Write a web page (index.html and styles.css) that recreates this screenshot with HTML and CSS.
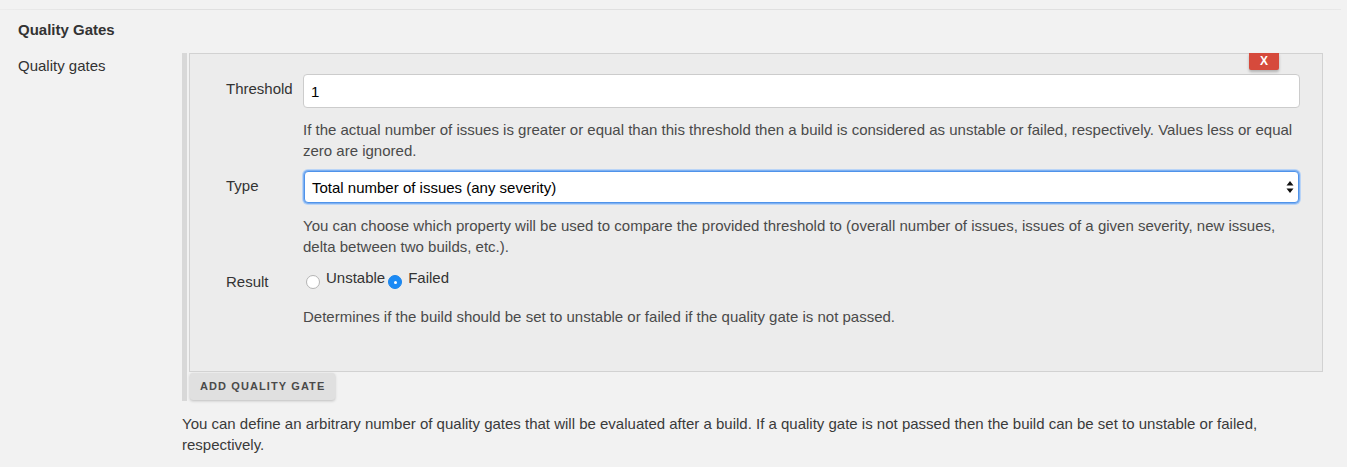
FILE: index.html
```html
<!DOCTYPE html>
<html>
<head>
<meta charset="utf-8">
<link rel="stylesheet" href="styles.css">
</head>
<body>
<div class="rule"></div>
<div class="section-title">Quality Gates</div>
<div class="field">
  <div class="field-label">Quality gates</div>
  <div class="field-body">
    <div class="repeated">
      <div class="chunk">
        <div class="delete-btn">X</div>
        <div class="entry">
          <div class="entry-label">Threshold</div>
          <div class="entry-control">
            <div class="text-input">1</div>
            <div class="help help-first">If the actual number of issues is greater or equal than this threshold then a build is considered as unstable or failed, respectively. Values less or equal zero are ignored.</div>
          </div>
        </div>
        <div class="entry entry-type">
          <div class="entry-label">Type</div>
          <div class="entry-control">
            <div class="select-input">
              <span>Total number of issues (any severity)</span>
              <svg class="arrows" width="8" height="12" viewBox="0 0 8 12"><path d="M4 0 L7.5 4.5 L0.5 4.5 Z M4 12 L7.5 7.5 L0.5 7.5 Z" fill="#111"/></svg>
            </div>
            <div class="help">You can choose which property will be used to compare the provided threshold to (overall number of issues, issues of a given severity, new issues, delta between two builds, etc.).</div>
          </div>
        </div>
        <div class="entry entry-result">
          <div class="entry-label">Result</div>
          <div class="entry-control">
            <div class="radios">
              <span class="radio"></span><span class="radio-text">Unstable</span>
              <span class="radio checked"></span><span class="radio-text">Failed</span>
            </div>
            <div class="help help-result">Determines if the build should be set to unstable or failed if the quality gate is not passed.</div>
          </div>
        </div>
      </div>
      <div class="add-btn">ADD QUALITY GATE</div>
    </div>
    <div class="description">You can define an arbitrary number of quality gates that will be evaluated after a build. If a quality gate is not passed then the build can be set to unstable or failed, respectively.</div>
  </div>
</div>
</body>
</html>
```

FILE: styles.css
```css
html, body {
  margin: 0;
  padding: 0;
  background: #f2f2f2;
  font-family: "Liberation Sans", Arial, Helvetica, sans-serif;
  font-size: 15px;
  color: #333;
}
body {
  padding-top: 9px;
}
.rule {
  height: 1px;
  margin-right: 6px;
  background: linear-gradient(to right, #ececec, #e0e0e0 8%, #e0e0e0 92%, #e8e8e8);
}
.section-title {
  margin-top: 10px;
  padding-left: 18px;
  line-height: 20px;
  font-weight: bold;
  color: #333;
}
.field {
  display: grid;
  grid-template-columns: 182px 1fr;
  margin-top: 13px;
}
.field-label {
  padding-left: 18px;
  padding-top: 3px;
  line-height: 20px;
  color: #333;
}
.field-body {
  padding-right: 24px;
}
.repeated {
  border-left: 5px solid #d8d8d8;
  padding-left: 2px;
  padding-bottom: 1px;
}
.chunk {
  position: relative;
  background: #ececec;
  border: 1px solid #d2d2d2;
  padding: 20px 22px 44px 0;
}
.delete-btn {
  position: absolute;
  top: -1px;
  right: 43px;
  width: 30px;
  height: 17px;
  line-height: 17px;
  text-align: center;
  background: #d64a3c;
  color: #fff;
  font-size: 12px;
  font-weight: bold;
  border-radius: 0 0 2px 2px;
  box-shadow: 0 2px 3px rgba(0,0,0,0.25);
}
.entry {
  display: grid;
  grid-template-columns: 113px 1fr;
}
.entry-label {
  padding-left: 36px;
  padding-top: 4px;
  line-height: 21px;
  color: #333;
}
.text-input {
  height: 32px;
  line-height: 34px;
  padding-left: 7px;
  background: #fff;
  border: 1px solid #cccccc;
  border-radius: 4px;
  color: #000;
}
.help {
  line-height: 21px;
  color: #4a4a4a;
  margin-top: 12px;
}
.help-first {
  margin-top: 11px;
}
.entry-type {
  margin-top: 9px;
}
.entry-type .entry-label {
  padding-top: 5px;
}
.select-input {
  display: flex;
  align-items: center;
  justify-content: space-between;
  height: 30px;
  margin: 1px;
  padding: 0 4px 0 7px;
  background: #fff;
  border: 1px solid #4f93ea;
  border-radius: 4px;
  box-shadow: 0 0 0 1px #7eb0f0, 0 0 0 2px #b9d4f7;
  color: #000;
}
.arrows {
  display: block;
}
.entry-result {
  margin-top: 10px;
}
.radios {
  display: flex;
  align-items: flex-start;
  line-height: 21px;
  color: #333;
}
.radio {
  box-sizing: border-box;
  width: 14px;
  height: 14px;
  margin: 8px 6px 0 3px;
  border-radius: 50%;
  background: #fff;
  border: 1px solid #b4b4b4;
  flex: none;
}
.radio.checked {
  margin-left: 3px;
  background: #1b8af5;
  border-color: #1a84ec;
  position: relative;
}
.radio.checked::after {
  content: "";
  position: absolute;
  left: 4.5px;
  top: 4.5px;
  width: 3px;
  height: 3px;
  border-radius: 50%;
  background: #fff;
}
.help-result {
  margin-top: 17px;
}
.add-btn {
  display: inline-block;
  margin-top: 1px;
  margin-left: 1px;
  height: 27px;
  line-height: 27px;
  padding: 0 10px 0 10px;
  background: #e0e0e0;
  border-radius: 3px;
  box-shadow: 0 1px 3px rgba(0,0,0,0.22);
  font-size: 11px;
  font-weight: bold;
  letter-spacing: 1.1px;
  color: #4a4a4a;
}
.description {
  margin-top: 12px;
  line-height: 21px;
  color: #3a3a3a;
}
```
